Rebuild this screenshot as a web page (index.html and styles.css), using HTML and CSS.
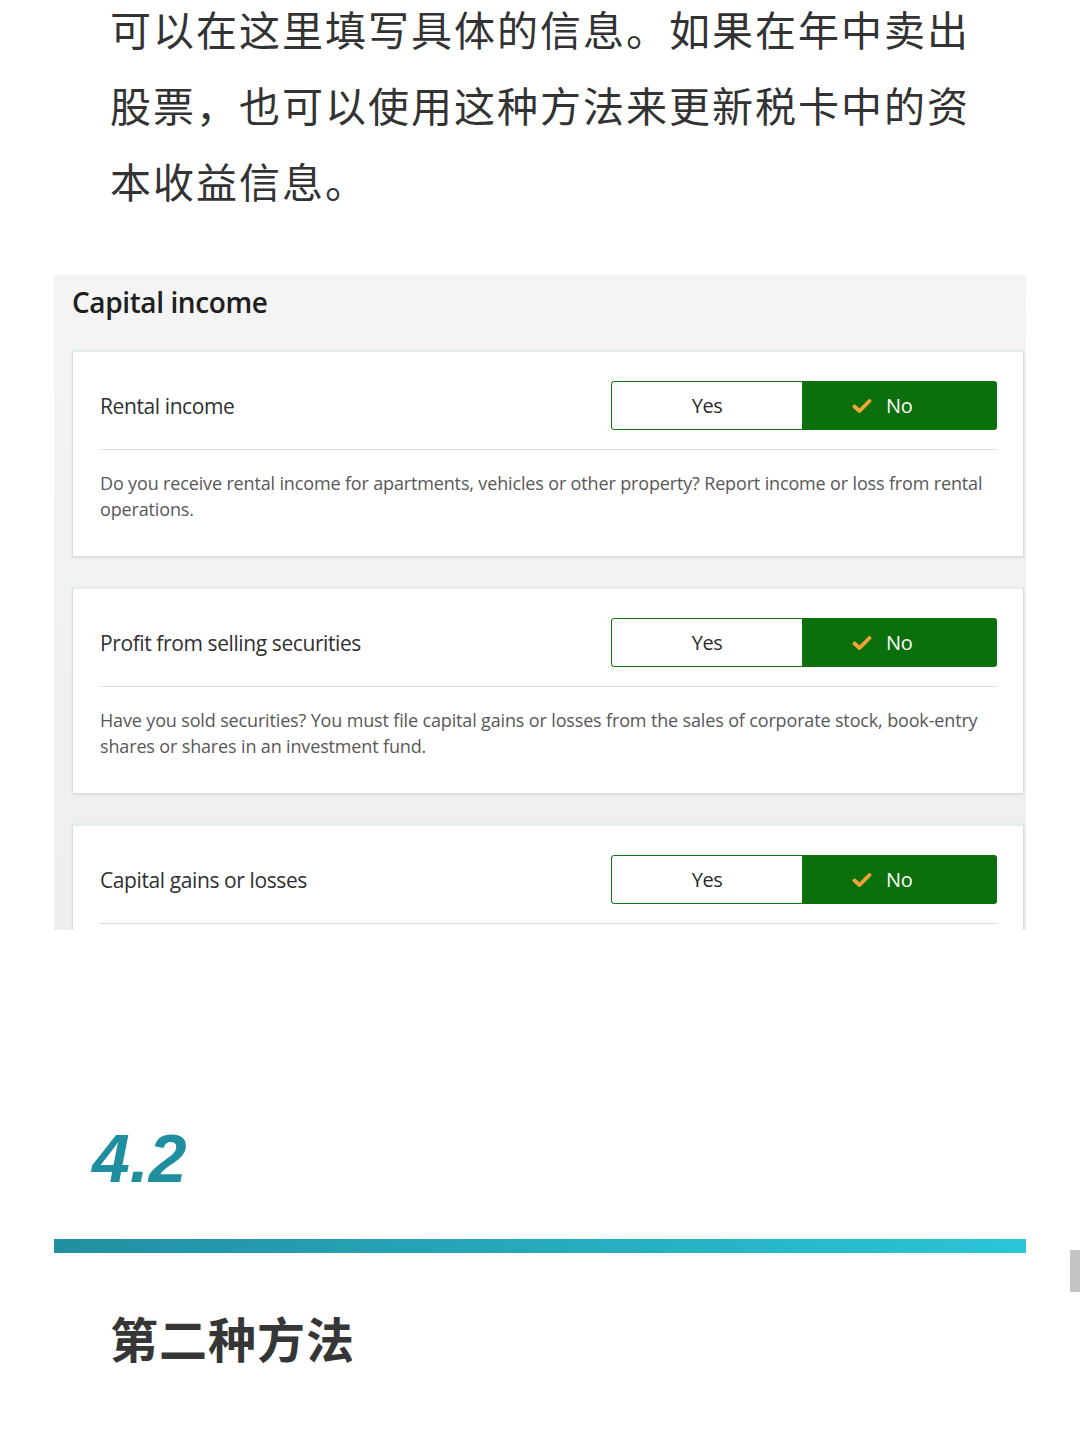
FILE: index.html
```html
<!DOCTYPE html>
<html lang="zh">
<head>
<meta charset="utf-8">
<title>Capital income</title>
<link rel="stylesheet" href="styles.css">
</head>
<body>
<div class="page">
  <p class="lead">可以在这里填写具体的信息。如果在年中卖出股票，也可以使用这种方法来更新税卡中的资本收益信息。</p>

  <div class="figure">
    <div class="fig-title">Capital income</div>
    <div class="cards">
      <div class="card">
        <div class="row">
          <span class="label">Rental income</span>
          <div class="toggle">
            <span class="opt yes">Yes</span>
            <span class="opt no"><svg class="check" viewBox="0 0 20 16" width="20" height="16"><path d="M2.5 8.5 L7.5 13 L17.5 3" fill="none" stroke="#f0a435" stroke-width="3.8" stroke-linecap="round" stroke-linejoin="round"/></svg>No</span>
          </div>
        </div>
        <p class="desc">Do you receive rental income for apartments, vehicles or other property? Report income or loss from rental operations.</p>
      </div>

      <div class="card">
        <div class="row">
          <span class="label">Profit from selling securities</span>
          <div class="toggle">
            <span class="opt yes">Yes</span>
            <span class="opt no"><svg class="check" viewBox="0 0 20 16" width="20" height="16"><path d="M2.5 8.5 L7.5 13 L17.5 3" fill="none" stroke="#f0a435" stroke-width="3.8" stroke-linecap="round" stroke-linejoin="round"/></svg>No</span>
          </div>
        </div>
        <p class="desc">Have you sold securities? You must file capital gains or losses from the sales of corporate stock, book-entry shares or shares in an investment fund.</p>
      </div>

      <div class="card">
        <div class="row">
          <span class="label">Capital gains or losses</span>
          <div class="toggle">
            <span class="opt yes">Yes</span>
            <span class="opt no"><svg class="check" viewBox="0 0 20 16" width="20" height="16"><path d="M2.5 8.5 L7.5 13 L17.5 3" fill="none" stroke="#f0a435" stroke-width="3.8" stroke-linecap="round" stroke-linejoin="round"/></svg>No</span>
          </div>
        </div>
        <p class="desc">&nbsp;</p>
      </div>
    </div>
  </div>

  <div class="section-num">4.2</div>
  <div class="bar"></div>
  <h2 class="sub">第二种方法</h2>
</div>
<div class="scroll-thumb"></div>
</body>
</html>
```

FILE: styles.css
```css
html, body {
  margin: 0;
  padding: 0;
  background: #ffffff;
}

body {
  font-family: "Noto Sans CJK SC", "Noto Sans", sans-serif;
  color: #333333;
  position: relative;
  height: 1440px;
  overflow: hidden;
}

.page {
  display: flex;
  flex-direction: column;
}

.lead {
  margin: -10px 0 0 110px;
  width: 880px;
  font-size: 41px;
  letter-spacing: 2px;
  line-height: 76px;
  color: #333333;
}

.figure {
  margin: 57px 0 0 54px;
  width: 972px;
  height: 655px;
  background: linear-gradient(to bottom, #f4f4f4, #efefef);
  overflow: hidden;
  display: flex;
  flex-direction: column;
}

.fig-title {
  flex-shrink: 0;
  height: 75px;
  box-sizing: border-box;
  padding: 7px 0 0 18px;
  font-family: "Open Sans", "Noto Sans", sans-serif;
  font-weight: 600;
  font-size: 28px;
  line-height: 40px;
  color: #1e1e1e;
  letter-spacing: -0.4px;
}

.cards {
  flex-shrink: 0;
  display: flex;
  flex-direction: column;
  gap: 30px;
  margin-left: 18px;
  width: 952px;
}

.card {
  flex-shrink: 0;
  background: #ffffff;
  border: 1px solid #dcdcdc;
  border-top: 2px solid #e4f1e4;
  box-shadow: 0 1px 3px rgba(0, 0, 0, 0.08);
  padding: 0 26px 0 27px;
  box-sizing: border-box;
}

.row {
  display: flex;
  align-items: center;
  justify-content: space-between;
  padding: 29px 0 19px;
  border-bottom: 1px solid #dedede;
}

.label {
  font-family: "Open Sans", "Noto Sans", sans-serif;
  font-size: 21px;
  color: #303030;
  letter-spacing: -0.4px;
}

.toggle {
  display: flex;
  width: 386px;
  height: 49px;
  border-radius: 3px;
  overflow: hidden;
}

.opt {
  display: flex;
  align-items: center;
  font-family: "Open Sans", "Noto Sans", sans-serif;
  font-size: 20px;
  letter-spacing: -0.4px;
}

.yes {
  width: 191px;
  justify-content: center;
  box-sizing: border-box;
  border: 1px solid #0f7a0f;
  border-right: none;
  border-radius: 3px 0 0 3px;
  background: #ffffff;
  color: #2a2a2a;
}

.no {
  flex: 1;
  background: #0b700b;
  color: #ffffff;
  gap: 14px;
  padding-left: 50px;
}

.check {
  display: block;
}

.desc {
  margin: 20px 0 0;
  padding-bottom: 34px;
  font-family: "Open Sans", "Noto Sans", sans-serif;
  font-size: 18px;
  line-height: 26px;
  color: #585858;
  letter-spacing: -0.15px;
}

.section-num {
  margin: 194px 0 0 92px;
  font-family: "Liberation Sans", Arial, sans-serif;
  font-weight: bold;
  font-style: italic;
  font-size: 68px;
  line-height: 68px;
  color: #1f8e9e;
}

.bar {
  margin: 47px 0 0 54px;
  width: 972px;
  height: 14px;
  background: linear-gradient(to right, #228fa0, #2ac5d7);
}

.sub {
  margin: 60px 0 0 110px;
  font-family: "Noto Sans CJK SC", sans-serif;
  font-weight: bold;
  font-size: 48px;
  line-height: 48px;
  letter-spacing: 1px;
  color: #363636;
}

.scroll-thumb {
  position: absolute;
  right: 0;
  top: 1250px;
  width: 10px;
  height: 42px;
  background: #c4c4c4;
}
```
